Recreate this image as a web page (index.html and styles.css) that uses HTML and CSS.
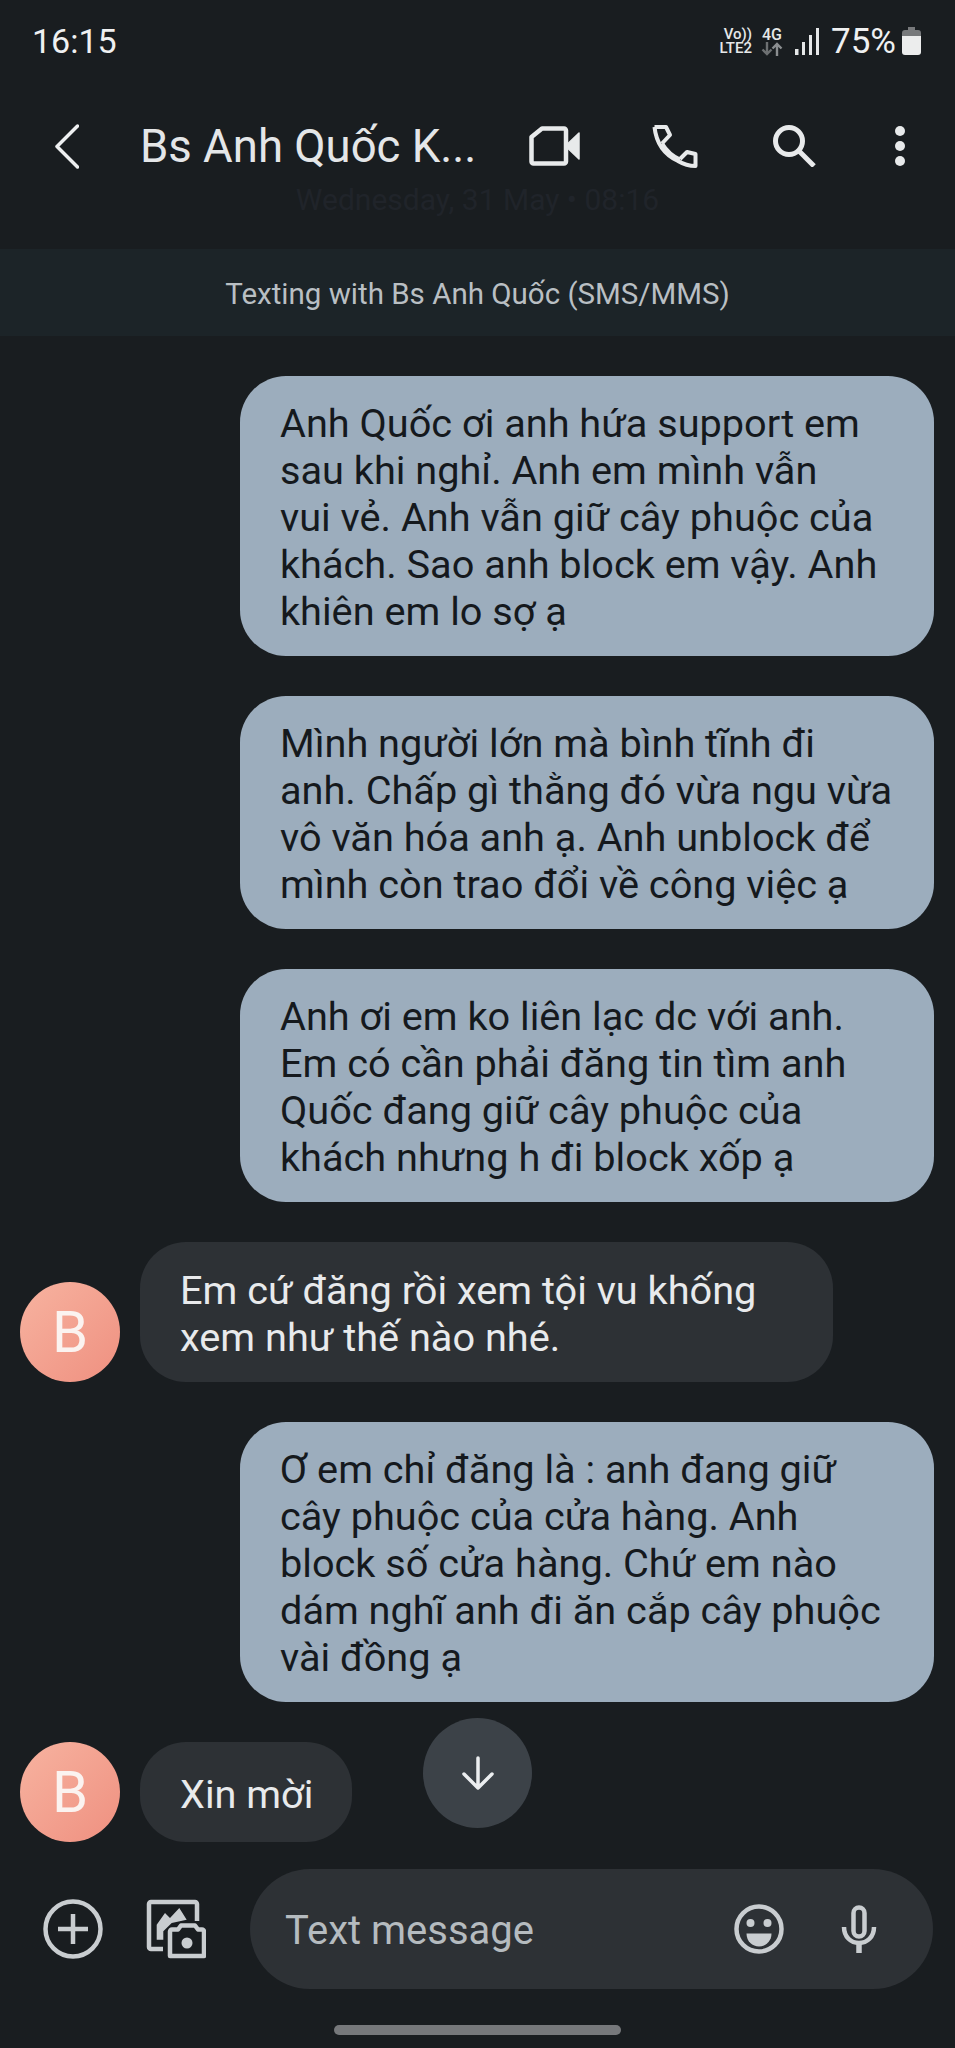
FILE: index.html
```html
<!DOCTYPE html>
<html lang="en">
<head>
    <meta charset="UTF-8">
    <meta name="viewport" content="width=device-width, initial-scale=1.0">
    <title>Bs Anh Quốc</title>
    <link rel="stylesheet" href="styles.css">
</head>
<body>
    <div class="phone">
        <div class="status-bar">
            <span class="clock">16:15</span>
            <div class="status-icons">
                <div class="volte"><span>Vo))</span><span>LTE2</span></div>
                <div class="net">
                    <span>4G</span>
                    <svg width="22" height="14" viewBox="0 0 22 14" fill="none" stroke-width="2.4">
                        <path d="M6 0v12M1.500 7.500 6 12l4.500-4.500" stroke="#6d7072"/>
                        <path d="M16 14V2M11.500 6.500 16 2l4.500 4.500" stroke="#8b8e90"/>
                    </svg>
                </div>
                <svg class="signal" width="24" height="27" viewBox="0 0 24 27" fill="#e6e8e9">
                    <rect x="0" y="21" width="3.500" height="6"/>
                    <rect x="7" y="14" width="3" height="13"/>
                    <rect x="14" y="7" width="3" height="20"/>
                    <rect x="21" y="0" width="3" height="27"/>
                </svg>
                <span class="battery-pct">75%</span>
                <svg width="19" height="28" viewBox="0 0 19 28">
                    <path d="M6 0h7v3h3a3 3 0 0 1 3 3v4H0V6a3 3 0 0 1 3-3h3z" fill="#77797b"/>
                    <path d="M0 9h19v16a3 3 0 0 1-3 3H3a3 3 0 0 1-3-3z" fill="#eceded"/>
                </svg>
            </div>
        </div>

        <div class="app-bar">
            <svg class="back" width="24" height="45" viewBox="0 0 24 45" fill="none" stroke="#eef0f1" stroke-width="3.500" stroke-linecap="round" stroke-linejoin="round">
                <path d="M22.500 2 2 22.500 22.500 43"/>
            </svg>
            <span class="title">Bs Anh Quốc K...</span>
            <svg class="ic-video" width="51" height="40" viewBox="0 0 51 40" fill="none" stroke="#e8eaeb" stroke-width="4.500" stroke-linejoin="round">
                <path d="M13 2.500h22a2 2 0 0 1 2 2v31a2 2 0 0 1-2 2H4.500a2 2 0 0 1-2-2V11z"/>
                <path d="M39 17.500 50 7v26L39 22.500z" fill="#e8eaeb" stroke-width="1.500"/>
            </svg>
            <svg class="ic-phone" width="46" height="45" viewBox="0 0 46 45" fill="none" stroke="#e8eaeb" stroke-width="4" stroke-linejoin="round">
                <path d="M2.500 3H14l4 8-8 8.500"/>
                <path d="M2.500 3C4 17 11 30 26 37c5 3 11 5 17.500 5V30l-8.500-2-7 7"/>
                <path d="M10 19.500C14 26 20 32 28 35.500"/>
            </svg>
            <svg class="ic-search" width="44" height="42" viewBox="0 0 44 42" fill="none" stroke="#e8eaeb" stroke-width="5">
                <circle cx="17" cy="16" r="13.500"/>
                <path d="m27 26 15 15"/>
            </svg>
            <svg class="ic-more" width="12" height="40" viewBox="0 0 12 40" fill="#e8eaeb">
                <circle cx="6" cy="5" r="5"/>
                <circle cx="6" cy="20" r="5"/>
                <circle cx="6" cy="35" r="5"/>
            </svg>
        </div>

        <div class="date-line">Wednesday, 31 May • 08:16</div>
        <div class="banner">Texting with Bs Anh Quốc (SMS/MMS)</div>

        <div class="thread">
            <div class="msg msg-out">Anh Quốc ơi anh hứa support em<br>sau khi nghỉ. Anh em mình vẫn<br>vui vẻ. Anh vẫn giữ cây phuộc của<br>khách. Sao anh block em vậy. Anh<br>khiên em lo sợ ạ</div>
            <div class="msg msg-out">Mình người lớn mà bình tĩnh đi<br>anh. Chấp gì thằng đó vừa ngu vừa<br>vô văn hóa anh ạ. Anh unblock để<br>mình còn trao đổi về công việc ạ</div>
            <div class="msg msg-out">Anh ơi em ko liên lạc dc với anh.<br>Em có cần phải đăng tin tìm anh<br>Quốc đang giữ cây phuộc của<br>khách nhưng h đi block xốp ạ</div>
            <div class="row-in">
                <div class="avatar">B</div>
                <div class="msg msg-in msg-wide">Em cứ đăng rồi xem tội vu khống<br>xem như thế nào nhé.</div>
            </div>
            <div class="msg msg-out">Ơ em chỉ đăng là : anh đang giữ<br>cây phuộc của cửa hàng. Anh<br>block số cửa hàng. Chứ em nào<br>dám nghĩ anh đi ăn cắp cây phuộc<br>vài đồng ạ</div>
            <div class="row-in">
                <div class="avatar">B</div>
                <div class="msg msg-in msg-short">Xin mời</div>
            </div>
            <button class="scroll-down">
                <svg width="32" height="34" viewBox="0 0 32 34" fill="none" stroke="#eceef0" stroke-width="3.500" stroke-linecap="round" stroke-linejoin="round">
                    <path d="M16 2v30M2 18l14 14 14-14"/>
                </svg>
            </button>
        </div>

        <div class="composer">
            <svg class="ic-add" width="60" height="60" viewBox="0 0 60 60" fill="none" stroke="#c9cdd0" stroke-width="4.500">
                <circle cx="30" cy="30" r="27.500"/>
                <path d="M30 15v30M15 30h30"/>
            </svg>
            <svg class="ic-gallery" width="60" height="60" viewBox="0 0 60 60" fill="none" stroke="#c9cdd0" stroke-width="4.500" stroke-linejoin="round">
                <path d="M17 50H5a2 2 0 0 1-2-2V5a2 2 0 0 1 2-2h44a2 2 0 0 1 2 2v17"/>
                <path d="M10.700 40.700V25.700L19 14l5 5 9.300-10 7.400 11.700L25.700 24l-8.400 8.300v8.400z" fill="#c9cdd0" stroke="none"/>
                <path d="M24 57V32.500a2 2 0 0 1 2-2h6l3-4h14l3 4h4a2 2 0 0 1 2 2V57z"/>
                <circle cx="41" cy="44" r="5.500" fill="#c9cdd0" stroke="none"/>
            </svg>
            <div class="input-box">
                <span class="placeholder">Text message</span>
                <svg class="ic-emoji" width="50" height="50" viewBox="0 0 50 50" fill="none" stroke="#c9cdd0" stroke-width="4.500">
                    <circle cx="25" cy="25" r="22.500"/>
                    <circle cx="16.500" cy="19" r="4" fill="#c9cdd0" stroke="none"/>
                    <circle cx="33.500" cy="19" r="4" fill="#c9cdd0" stroke="none"/>
                    <path d="M12.500 29.500h25c0 8-6 13-12.500 13s-12.500-5-12.500-13z" fill="#c9cdd0" stroke="none"/>
                </svg>
                <svg class="ic-mic" width="36" height="48" viewBox="0 0 36 48" fill="none" stroke="#c9cdd0" stroke-width="4.500">
                    <rect x="12.500" y="2.500" width="11" height="29" rx="5.500"/>
                    <path d="M3 22c0 10 7 16 15 16s15-6 15-16"/>
                    <path d="M18 38v10" stroke-width="5.500"/>
                </svg>
            </div>
        </div>

        <div class="home-bar"></div>
    </div>
</body>
</html>
```

FILE: styles.css
```css
* {
    box-sizing: border-box;
}
body {
    margin: 0;
    background-color: #191d20;
    font-family: Roboto, "Noto Sans", sans-serif;
    color: #e8eaec;
}
.phone {
    width: 955px;
    height: 2048px;
    overflow: hidden;
    display: flex;
    flex-direction: column;
}

/* status bar */
.status-bar {
    height: 82px;
    padding: 0 34px 0 32px;
    display: flex;
    justify-content: space-between;
    align-items: center;
}
.clock {
    font-size: 34px;
    color: #eff0f1;
}
.status-icons {
    display: flex;
    align-items: center;
}
.volte {
    display: flex;
    flex-direction: column;
    align-items: flex-end;
    width: 36px;
    font-size: 15px;
    line-height: 14px;
    font-weight: 500;
    color: #e6e8e9;
}
.net {
    display: flex;
    flex-direction: column;
    align-items: center;
    margin-left: 9px;
    font-size: 16px;
    line-height: 15px;
    font-weight: 500;
    color: #e6e8e9;
}
.signal {
    margin-left: 12px;
}
.battery-pct {
    margin-left: 12px;
    margin-right: 6px;
    font-size: 35px;
    color: #eff0f1;
}

/* app bar */
.app-bar {
    height: 84px;
    margin-top: 22px;
    padding-left: 55px;
    display: flex;
    align-items: center;
}
.title {
    margin-left: 61px;
    width: 389px;
    font-size: 45.5px;
    color: #e4e6e8;
    white-space: nowrap;
}
.ic-phone {
    margin-left: 72px;
}
.ic-search {
    margin-left: 74px;
}
.ic-more {
    margin-left: 78px;
}

.date-line {
    height: 61px;
    text-align: center;
    font-size: 30px;
    line-height: 24px;
    color: #20242a;
}
.banner {
    height: 87px;
    line-height: 90px;
    background-color: #1c2428;
    text-align: center;
    font-size: 29.5px;
    color: #b9bfc3;
}

/* messages */
.thread {
    position: relative;
    padding: 40px 21px 0 20px;
    display: flex;
    flex-direction: column;
    gap: 40px;
    flex: 1;
}
.msg {
    padding: 24px 40px 21px;
    border-radius: 46px;
    font-size: 39.7px;
    line-height: 47px;
    white-space: nowrap;
}
.msg-out {
    align-self: flex-end;
    width: 694px;
    background-color: #9cadbd;
    color: #15191d;
}
.msg-in {
    background-color: #2d3135;
    color: #e8eaec;
}
.msg-wide {
    width: 693px;
    padding-top: 25px;
}
.msg-short {
    height: 100px;
    padding-top: 29px;
    padding-right: 39px;
}
.row-in {
    display: flex;
    align-items: flex-end;
    gap: 20px;
}
.avatar {
    width: 100px;
    height: 100px;
    border-radius: 50%;
    background: linear-gradient(135deg, #f7b3a0, #ef9080);
    color: #fbf3f0;
    text-align: center;
    font-size: 58px;
    line-height: 100px;
}
.scroll-down {
    position: absolute;
    left: 423px;
    top: 1382px;
    width: 109px;
    height: 110px;
    padding: 0;
    border: none;
    border-radius: 50%;
    background-color: #3c4248;
    display: flex;
    align-items: center;
    justify-content: center;
}

/* composer */
.composer {
    height: 120px;
    padding-left: 43px;
    display: flex;
    align-items: center;
}
.ic-gallery {
    margin-left: 43px;
}
.input-box {
    margin-left: 44px;
    width: 683px;
    height: 120px;
    padding-left: 35px;
    border-radius: 60px;
    background-color: #2d3135;
    display: flex;
    align-items: center;
}
.placeholder {
    width: 449px;
    padding-top: 2px;
    font-size: 40px;
    color: #b5bbbf;
}
.ic-mic {
    margin-left: 57px;
}
.home-bar {
    width: 287px;
    height: 10px;
    margin: 36px auto 13px;
    border-radius: 5px;
    background-color: #76787b;
}
```
